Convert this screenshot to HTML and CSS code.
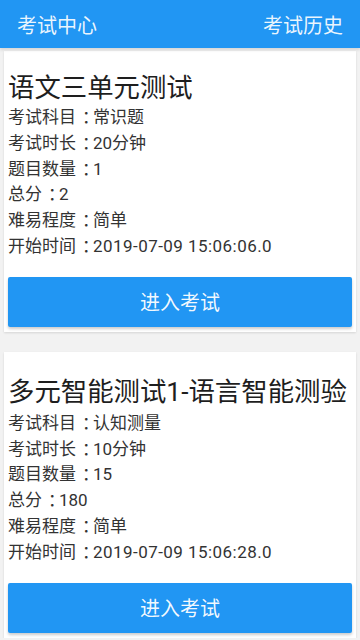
FILE: index.html
```html
<!DOCTYPE html>
<html lang="zh-CN">
<head>
<meta charset="utf-8">
<meta name="viewport" content="width=device-width, initial-scale=1">
<title>考试中心</title>
<link rel="stylesheet" href="styles.css">
</head>
<body>
<header class="header">
  <span class="header-title">考试中心</span>
  <span class="header-link">考试历史</span>
</header>
<main class="list">
  <section class="card">
    <h2 class="card-title">语文三单元测试</h2>
    <div class="row">考试科目<span class="colon">：</span>常识题</div>
    <div class="row">考试时长<span class="colon">：</span>20分钟</div>
    <div class="row">题目数量<span class="colon">：</span>1</div>
    <div class="row">总分<span class="colon">：</span>2</div>
    <div class="row">难易程度<span class="colon">：</span>简单</div>
    <div class="row">开始时间<span class="colon">：</span><span class="date">2019-07-09 15:06:06.0</span></div>
    <button class="btn">进入考试</button>
  </section>
  <section class="card card-second">
    <h2 class="card-title">多元智能测试1-语言智能测验</h2>
    <div class="row">考试科目<span class="colon">：</span>认知测量</div>
    <div class="row">考试时长<span class="colon">：</span>10分钟</div>
    <div class="row">题目数量<span class="colon">：</span>15</div>
    <div class="row">总分<span class="colon">：</span>180</div>
    <div class="row">难易程度<span class="colon">：</span>简单</div>
    <div class="row">开始时间<span class="colon">：</span><span class="date">2019-07-09 15:06:28.0</span></div>
    <button class="btn">进入考试</button>
  </section>
</main>
</body>
</html>
```

FILE: styles.css
```css
* { box-sizing: border-box; }
html, body { margin: 0; padding: 0; }
body {
  background: #f2f2f2;
  font-family: Roboto, "Noto Sans CJK SC", sans-serif;
  color: #222;
  overflow: hidden;
}
.header {
  height: 48px;
  background: #2196f3;
  display: flex;
  align-items: center;
  justify-content: space-between;
  padding: 0 17px;
  color: rgba(255,255,255,0.92);
  font-size: 20px;
  box-shadow: 0 2px 3px rgba(0,0,0,0.12);
  position: relative;
  z-index: 1;
}
.list {
  display: flex;
  flex-direction: column;
  gap: 20px;
  padding: 3px 4px 0;
}
.card {
  background: #fff;
  padding: 20px 4px 5px;
  box-shadow: 0 1px 2px rgba(0,0,0,0.12);
  display: flex;
  flex-direction: column;
}
.card-title {
  margin: 0;
  font-size: 26.4px;
  font-weight: normal;
  line-height: 34px;
  color: #1e1e1e;
  white-space: nowrap;
}
.card-second .card-title {
  line-height: 38px;
  margin-top: 1px;
}
.row {
  font-size: 17px;
  line-height: 25.8px;
  height: 25.8px;
  color: #333;
  white-space: nowrap;
}
.colon {
  padding-left: 6px;
  letter-spacing: -6px;
}
.date {
  letter-spacing: 0.45px;
}
.btn {
  margin-top: 17px;
  height: 50px;
  border: none;
  border-radius: 2px;
  background: #2196f3;
  color: rgba(255,255,255,0.95);
  font-family: inherit;
  font-size: 20px;
  box-shadow: 0 2px 3px rgba(0,0,0,0.2);
}
```
